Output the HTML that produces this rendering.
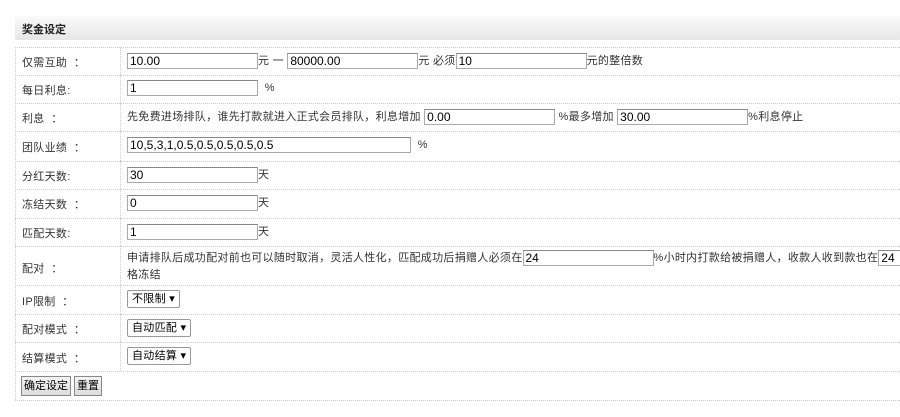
<!DOCTYPE html>
<html><head><meta charset="utf-8"><style>
body{margin:0;width:900px;height:417px;background:#fff;font-family:"Liberation Sans","Noto Sans CJK SC",sans-serif;font-size:11px;color:#333;position:relative;overflow:hidden}
.hd{position:absolute;left:15px;top:16px;width:885px;height:24px;background:linear-gradient(#fafafa,#e6e6e6);}
.hd b{position:absolute;left:7px;top:5px;font-size:11px;color:#222}
.row{position:absolute;left:15px;width:885px;border-bottom:1px dotted #ccc;}
.lab{position:absolute;left:7px;white-space:pre;letter-spacing:0.3px}
.sep{position:absolute;left:105px;top:0;bottom:0;border-left:1px dotted #ccc}
.v{position:absolute;left:112px;white-space:nowrap;letter-spacing:0.3px}
.in{display:inline-block;height:16px;border:1px solid #aaa;border-top-color:#888;box-sizing:border-box;vertical-align:middle;line-height:14px;padding-left:2px;color:#000;font-size:12px;letter-spacing:0}
.sel{display:inline-block;height:18px;border:1px solid #999;border-radius:2px;box-sizing:border-box;vertical-align:middle;line-height:16px;padding:0 4px;color:#000;font-size:11px}
.btn{position:absolute;top:5px;height:20px;border:1px solid #888;background:linear-gradient(#f4f4f4,#dcdcdc);box-sizing:border-box;line-height:18px;padding:0 2px;color:#000;font-size:11px;white-space:nowrap}
</style></head><body>
<div class="hd"><b>奖金设定</b></div>
<div style="position:absolute;left:15px;top:47px;width:885px;border-top:1px dotted #ccc"></div>
<div style="position:absolute;left:15px;top:47px;height:353px;border-left:1px dotted #ccc"></div>

<div class="row" style="top:47px;height:28px"><div class="sep"></div><span class="lab" style="top:7px">仅需互助  ：</span><span class="v" style="top:5px"><span class="in" style="width:131px">10.00</span>元 一 <span class="in" style="width:131px">80000.00</span>元 必须<span class="in" style="width:131px">10</span>元的整倍数</span></div>
<div class="row" style="top:75px;height:28px"><div class="sep"></div><span class="lab" style="top:7px">每日利息:</span><span class="v" style="top:5px"><span class="in" style="width:131px">1</span> &nbsp;%</span></div>
<div class="row" style="top:103px;height:28px"><div class="sep"></div><span class="lab" style="top:7px">利息  ：</span><span class="v" style="top:5px">先免费进场排队，谁先打款就进入正式会员排队，利息增加 <span class="in" style="width:131px">0.00</span> %最多增加 <span class="in" style="width:131px">30.00</span>%利息停止</span></div>
<div class="row" style="top:131px;height:30px"><div class="sep"></div><span class="lab" style="top:8px">团队业绩  ：</span><span class="v" style="top:6px"><span class="in" style="width:284px">10,5,3,1,0.5,0.5,0.5,0.5,0.5</span> &nbsp;%</span></div>
<div class="row" style="top:161px;height:28px"><div class="sep"></div><span class="lab" style="top:7px">分红天数:</span><span class="v" style="top:5px"><span class="in" style="width:131px">30</span>天</span></div>
<div class="row" style="top:189px;height:29px"><div class="sep"></div><span class="lab" style="top:7px">冻结天数  ：</span><span class="v" style="top:5px"><span class="in" style="width:131px">0</span>天</span></div>
<div class="row" style="top:218px;height:28px"><div class="sep"></div><span class="lab" style="top:7px">匹配天数:</span><span class="v" style="top:5px"><span class="in" style="width:131px">1</span>天</span></div>
<div class="row" style="top:246px;height:39px"><div class="sep"></div><span class="lab" style="top:14px">配对  ：</span><span class="v" style="top:4px;line-height:17px">申请排队后成功配对前也可以随时取消，灵活人性化，匹配成功后捐赠人必须在<span class="in" style="width:131px">24</span>%小时内打款给被捐赠人，收款人收到款也在<span class="in" style="width:131px">24</span><br>格冻结</span></div>
<div class="row" style="top:285px;height:29px"><div class="sep"></div><span class="lab" style="top:8px">IP限制  ：</span><span class="v" style="top:5px"><span class="sel">不限制 ▾</span></span></div>
<div class="row" style="top:314px;height:28px"><div class="sep"></div><span class="lab" style="top:7px">配对模式  ：</span><span class="v" style="top:5px"><span class="sel">自动匹配 ▾</span></span></div>
<div class="row" style="top:342px;height:29px"><div class="sep"></div><span class="lab" style="top:8px">结算模式  ：</span><span class="v" style="top:5px"><span class="sel">自动结算 ▾</span></span></div>
<div class="row" style="top:371px;height:29px"><span class="btn" style="left:6px">确定设定</span><span class="btn" style="left:59px">重置</span></div>
</body></html>
